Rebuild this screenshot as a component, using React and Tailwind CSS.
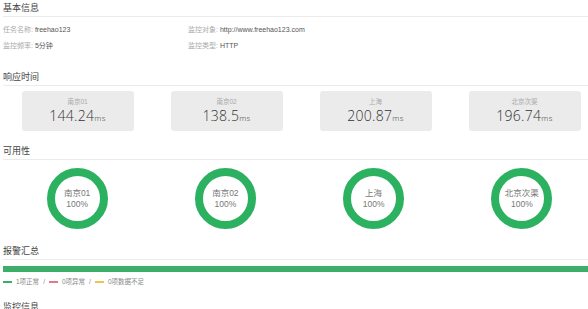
import React from 'react'

const font = { fontFamily: '"Liberation Sans", "Noto Sans CJK SC", sans-serif' }
const numFont = { fontFamily: '"Open Sans", "Noto Sans CJK SC", sans-serif' }

const cards = [
    { name: "南京01", value: "144.24" },
    { name: "南京02", value: "138.5" },
    { name: "上海", value: "200.87" },
    { name: "北京次渠", value: "196.74" },
]

function SectionTitle({ children }) {
    return (
        <div className="h-[17px] flex items-center border-b border-[#ebebeb] text-[9px] leading-none text-[#444]">
            {children}
        </div>
    )
}

function Ring({ name }) {
    return (
        <div className="w-[61px] h-[61px] rounded-full border-[8px] border-[#2bb160] flex flex-col items-center justify-center text-[8.5px] leading-[11px] text-[#777]">
            <span>{name}</span>
            <span>100%</span>
        </div>
    )
}

export default function App() {
    return (
        <div className="w-[588px] h-[309px] overflow-hidden bg-white" style={font}>
            <div className="w-[596px] pl-[3px]">

                {/* 基本信息 */}
                <SectionTitle>基本信息</SectionTitle>
                <div className="mt-[5px] grid grid-cols-[185px_1fr] text-[7px] leading-[16px]">
                    <div><span className="text-[#aaa]">任务名称: </span><span className="text-[#555]">freehao123</span></div>
                    <div><span className="text-[#aaa]">监控对象: </span><span className="text-[#555]">http://www.freehao123.com</span></div>
                    <div><span className="text-[#aaa]">监控频率: </span><span className="text-[#555]">5分钟</span></div>
                    <div><span className="text-[#aaa]">监控类型: </span><span className="text-[#555]">HTTP</span></div>
                </div>

                {/* 响应时间 */}
                <div className="mt-[15px]">
                    <SectionTitle>响应时间</SectionTitle>
                </div>
                <div className="mt-[5px] grid grid-cols-4 w-[596px]">
                    {cards.map((c) => (
                        <div key={c.name} className="flex justify-center">
                            <div className="w-[112px] h-[40px] rounded-[3px] bg-[#ebebeb] flex flex-col items-center justify-center">
                                <span className="text-[6.5px] leading-[10px] text-[#aaa]">{c.name}</span>
                                <span className="text-[14px] leading-[17px] text-[#333] font-light tracking-[0.3px]" style={numFont}>
                                    {c.value}<span className="text-[8px]">ms</span>
                                </span>
                            </div>
                        </div>
                    ))}
                </div>

                {/* 可用性 */}
                <div className="mt-[12px]">
                    <SectionTitle>可用性</SectionTitle>
                </div>
                <div className="mt-[8px] grid grid-cols-4">
                    {cards.map((c) => (
                        <div key={c.name} className="flex justify-center">
                            <Ring name={c.name} />
                        </div>
                    ))}
                </div>

                {/* 报警汇总 */}
                <div className="mt-[14px]">
                    <SectionTitle>报警汇总</SectionTitle>
                </div>
                <div className="mt-[6px] h-[6px] bg-[#3cae6a]"></div>
                <div className="mt-[5px] flex items-center text-[6.5px] leading-[10px] text-[#888]">
                    <span className="w-[9px] h-[2px] bg-[#3cae6a] mr-[4px]"></span>
                    <span>1项正常</span>
                    <span className="mx-[4px]">/</span>
                    <span className="w-[9px] h-[2px] bg-[#e07b8b] mr-[4px]"></span>
                    <span>0项异常</span>
                    <span className="mx-[4px]">/</span>
                    <span className="w-[9px] h-[2px] bg-[#f2c14e] mr-[4px]"></span>
                    <span>0项数据不足</span>
                </div>

                {/* 监控信息 */}
                <div className="mt-[12px]">
                    <SectionTitle>监控信息</SectionTitle>
                </div>
            </div>
        </div>
    )
}
